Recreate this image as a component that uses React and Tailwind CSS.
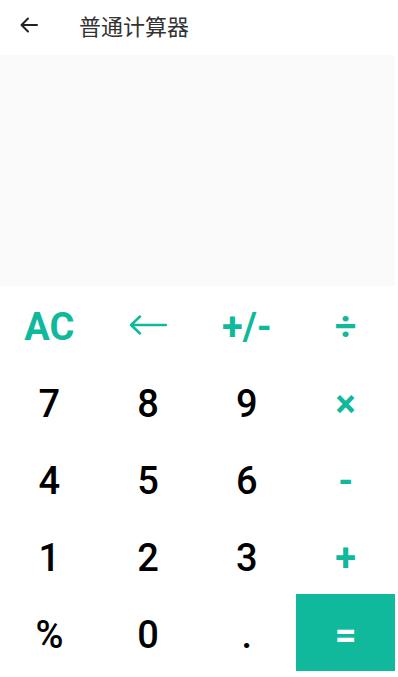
import React from "react";

const keys = [
  { label: "AC", kind: "op" },
  { label: "back", kind: "op" },
  { label: "+/-", kind: "op" },
  { label: "÷", kind: "op" },
  { label: "7" },
  { label: "8" },
  { label: "9" },
  { label: "×", kind: "op" },
  { label: "4" },
  { label: "5" },
  { label: "6" },
  { label: "-", kind: "op" },
  { label: "1" },
  { label: "2" },
  { label: "3" },
  { label: "+", kind: "op" },
  { label: "%" },
  { label: "0" },
  { label: "." },
  { label: "=", kind: "eq" },
];

const BackArrow = () => (
  <svg width="38" height="20" viewBox="0 0 38 20" fill="none">
    <path
      d="M2 10H37M2 10L11 1.5M2 10L11 18.5"
      stroke="#10b99b"
      strokeWidth="2.5"
      strokeLinecap="round"
      strokeLinejoin="round"
    />
  </svg>
);

const Key = ({ label, kind }) => {
  // equals key gets the filled block
  if (kind === "eq") {
    return (
      <button className="h-[77px] flex items-center justify-center pt-[6px] bg-[#10b99b] text-white text-[38px] font-bold">
        =
      </button>
    );
  }
  if (label === "back") {
    return (
      <button className="h-[77px] flex items-center justify-center pt-[1px]">
        <BackArrow />
      </button>
    );
  }
  return (
    <button
      className={
        kind === "op"
          ? "h-[77px] flex items-center justify-center pt-[6px] text-[#10b99b] text-[38px] font-bold"
          : "h-[77px] flex items-center justify-center pt-[6px] text-black text-[38px] font-medium"
      }
    >
      {label}
    </button>
  );
};

export default function App() {
  return (
    <div
      className="w-full h-[677px] bg-white flex flex-col"
      style={{ fontFamily: "Roboto, 'Noto Sans CJK SC', sans-serif" }}
    >
      {/* Header */}
      <div className="h-[55px] flex items-center pb-[5px] shrink-0">
        <div className="w-[79px] flex items-center pl-[20px]">
          <svg width="18" height="16" viewBox="0 0 18 16" fill="none">
            <path
              d="M1.5 8H17M1.5 8L8 1.5M1.5 8L8 14.5"
              stroke="#222"
              strokeWidth="2"
              strokeLinecap="round"
              strokeLinejoin="round"
            />
          </svg>
        </div>
        <span
          className="text-[22px] leading-none text-[#333]"
          style={{ fontFamily: "'Noto Sans CJK SC', sans-serif" }}
        >
          普通计算器
        </span>
      </div>

      {/* Display */}
      <div className="h-[231px] bg-[#fafafa] mr-[3px] shrink-0"></div>

      {/* Keypad */}
      <div className="grid grid-cols-4 mr-[3px]">
        {keys.map((k, i) => (
          <Key key={i} label={k.label} kind={k.kind} />
        ))}
      </div>
    </div>
  );
}
